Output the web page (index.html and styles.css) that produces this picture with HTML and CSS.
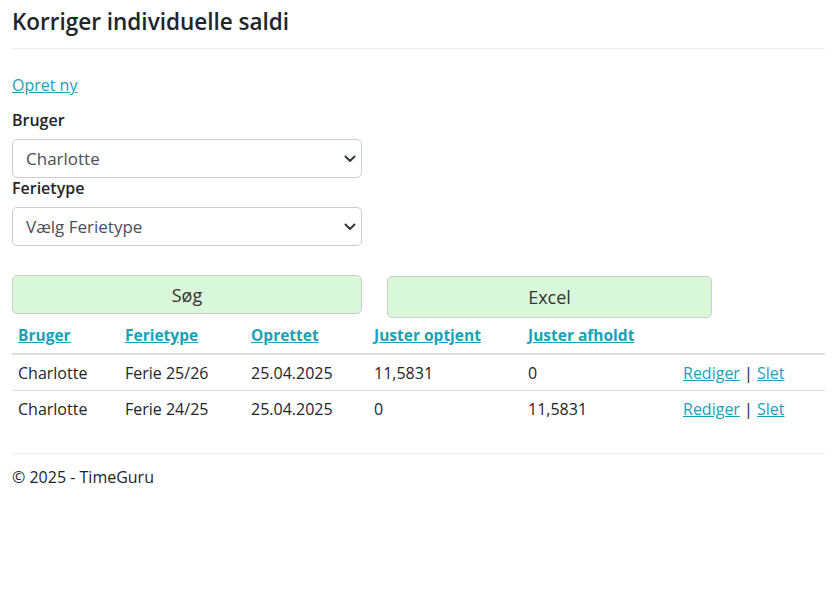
FILE: index.html
```html
<!DOCTYPE html>
<html lang="da">
<head>
    <meta charset="UTF-8">
    <meta name="viewport" content="width=device-width, initial-scale=1.0">
    <title>Korriger individuelle saldi</title>
    <link rel="stylesheet" href="styles.css">
</head>
<body>
    <div class="page">
        <h2 class="page-title">Korriger individuelle saldi</h2>

        <p class="create-link"><a href="#">Opret ny</a></p>

        <!-- Filter -->
        <form class="filter-form" onsubmit="return false;">
            <label for="bruger">Bruger</label>
            <div class="select-wrap">
                <select id="bruger" name="bruger">
                    <option>Charlotte</option>
                </select>
                <svg class="chevron" width="12" height="8" viewBox="0 0 12 8"><path d="M1.5 1.5l4.5 4.5 4.5-4.5" fill="none" stroke="#343a40" stroke-width="2" stroke-linecap="round" stroke-linejoin="round"/></svg>
            </div>

            <label for="ferietype">Ferietype</label>
            <div class="select-wrap">
                <select id="ferietype" name="ferietype">
                    <option>Vælg Ferietype</option>
                </select>
                <svg class="chevron" width="12" height="8" viewBox="0 0 12 8"><path d="M1.5 1.5l4.5 4.5 4.5-4.5" fill="none" stroke="#343a40" stroke-width="2" stroke-linecap="round" stroke-linejoin="round"/></svg>
            </div>

            <div class="button-row">
                <button type="submit" class="btn btn-search">Søg</button>
                <button type="button" class="btn btn-excel">Excel</button>
            </div>
        </form>

        <!-- Results -->
        <table class="saldi-table">
            <thead>
                <tr>
                    <th class="col-user"><a href="#">Bruger</a></th>
                    <th class="col-type"><a href="#">Ferietype</a></th>
                    <th class="col-date"><a href="#">Oprettet</a></th>
                    <th class="col-earned"><a href="#">Juster optjent</a></th>
                    <th class="col-taken"><a href="#">Juster afholdt</a></th>
                    <th></th>
                </tr>
            </thead>
            <tbody>
                <tr>
                    <td>Charlotte</td>
                    <td>Ferie 25/26</td>
                    <td>25.04.2025</td>
                    <td>11,5831</td>
                    <td>0</td>
                    <td><a href="#">Rediger</a> | <a href="#">Slet</a></td>
                </tr>
                <tr>
                    <td>Charlotte</td>
                    <td>Ferie 24/25</td>
                    <td>25.04.2025</td>
                    <td>0</td>
                    <td>11,5831</td>
                    <td><a href="#">Rediger</a> | <a href="#">Slet</a></td>
                </tr>
            </tbody>
        </table>

        <footer class="page-footer">
            <p>&copy; 2025 - TimeGuru</p>
        </footer>
    </div>
</body>
</html>
```

FILE: styles.css
```css
* {
    box-sizing: border-box;
    margin: 0;
    padding: 0;
}

body {
    font-family: "Open Sans", "Noto Sans", sans-serif;
    font-size: 16px;
    color: #212529;
    background-color: #fff;
}

a {
    color: #17a2b8;
    text-decoration: underline;
}

.page {
    padding: 0 10px 0 12px;
}

.page-title {
    font-size: 22.5px;
    font-weight: 600;
    line-height: 30px;
    padding: 7px 0 11px;
    border-bottom: 1px solid #eee;
}

.create-link {
    margin-top: 24px;
    line-height: 24px;
}

.filter-form {
    margin-top: 13px;
}

.filter-form label {
    display: block;
    font-weight: 600;
    line-height: 20px;
    margin-bottom: 9px;
}

.select-wrap {
    position: relative;
    width: 350px;
}

.select-wrap select {
    appearance: none;
    width: 100%;
    height: 39px;
    padding: 0 36px 0 13px;
    font-family: inherit;
    font-size: 17px;
    color: #495057;
    background-color: #fff;
    border: 1px solid #ccc;
    border-radius: 5px;
}

.chevron {
    position: absolute;
    right: 6px;
    top: 16px;
    pointer-events: none;
}

.button-row {
    display: flex;
    align-items: flex-start;
    gap: 25px;
    margin-top: 29px;
}

.btn {
    font-family: inherit;
    font-size: 18px;
    color: #333;
    background-color: #d9f7d9;
    border: 1px solid #ccc;
    border-radius: 5px;
    cursor: pointer;
}

.btn-search {
    width: 350px;
    height: 39px;
}

.btn-excel {
    width: 325px;
    height: 42px;
    margin-top: 1px;
}

.saldi-table {
    width: 100%;
    border-collapse: collapse;
    font-size: 16px;
}

.saldi-table th {
    text-align: left;
    font-size: 15.5px;
    font-weight: 700;
    line-height: 24px;
    padding: 5px 6px 6px;
    border-bottom: 2px solid #ddd;
}

.saldi-table td {
    line-height: 23px;
    padding: 7px 6px 5px;
    border-bottom: 1px solid #ddd;
}

.saldi-table tbody tr:last-child td {
    border-bottom: none;
}

.col-user { width: 107px; }
.col-type { width: 126px; }
.col-date { width: 123px; }
.col-earned { width: 154px; }
.col-taken { width: 155px; }

.page-footer {
    margin-top: 27px;
    border-top: 1px solid #eee;
    padding-top: 12px;
    font-size: 16px;
    line-height: 22px;
}
```
